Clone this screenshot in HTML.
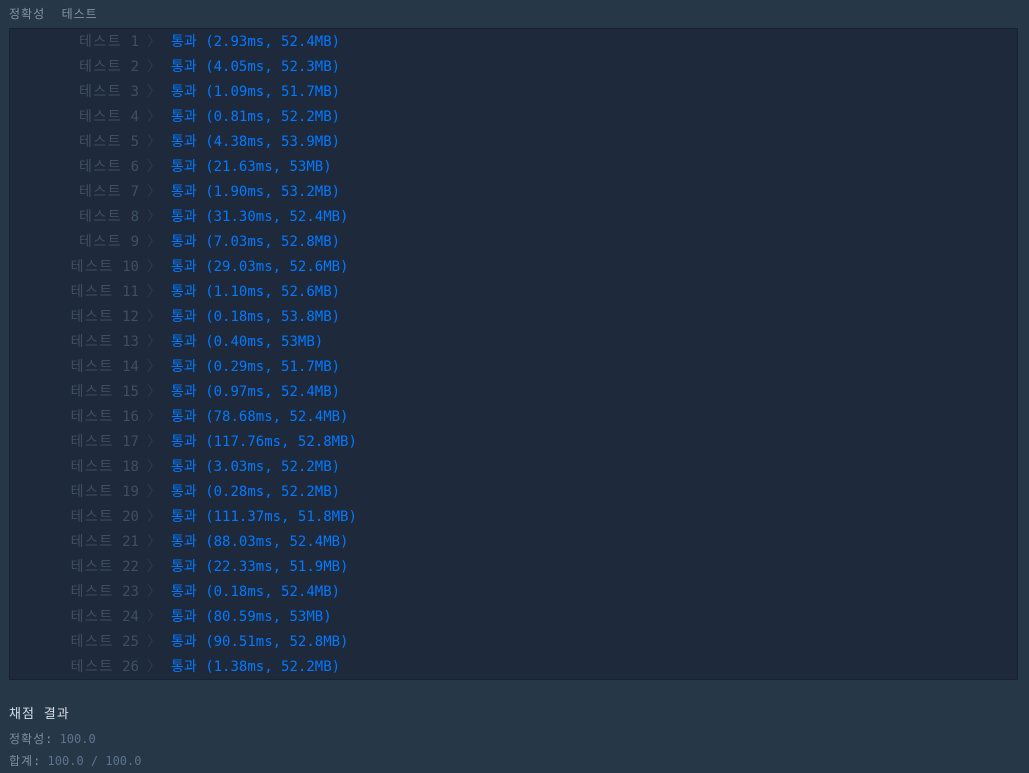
<!DOCTYPE html>
<html><head><meta charset="utf-8"><style>
html,body{margin:0;padding:0;background:#263747;width:1029px;height:773px;overflow:hidden}
body{font-family:"DejaVu Sans Mono","Noto Sans CJK KR",monospace;}
.hdr{position:absolute;left:9px;top:5px;font-size:12px;color:#8394a8;line-height:18px;letter-spacing:1px;white-space:pre}
.box{position:absolute;left:9px;top:28px;width:1007px;height:650px;background:#1e2a3b;border:1px solid #172130}
.row{position:absolute;left:0;height:25px;line-height:25px;font-size:14px;white-space:pre}
.lab{position:absolute;left:0;width:129px;text-align:right;color:#3f4f63}
.k{letter-spacing:1.5px}
.chev{position:absolute;left:137px;color:#2f3d4e;font-size:14px}
.res{position:absolute;left:161px;color:#0078ff}
.t{position:absolute;left:9px;font-size:12px;white-space:pre}
.t .k{letter-spacing:1px}
</style></head><body>
<div class="hdr">정확성  테스트</div>
<div class="box" id="b"></div>
<div class="t" style="top:703px;color:#d5dde6;font-size:13px"><span class="k">채점 결과</span></div>
<div class="t" style="top:730px;color:#7e8fa3"><span class="k">정확성</span>: <span style="color:#5c7390">100.0</span></div>
<div class="t" style="top:752px;color:#7e8fa3"><span class="k">합계</span>: <span style="color:#5c7390">100.0 / 100.0</span></div>
<script>
var r=["2.93ms, 52.4MB","4.05ms, 52.3MB","1.09ms, 51.7MB","0.81ms, 52.2MB","4.38ms, 53.9MB","21.63ms, 53MB","1.90ms, 53.2MB","31.30ms, 52.4MB","7.03ms, 52.8MB","29.03ms, 52.6MB","1.10ms, 52.6MB","0.18ms, 53.8MB","0.40ms, 53MB","0.29ms, 51.7MB","0.97ms, 52.4MB","78.68ms, 52.4MB","117.76ms, 52.8MB","3.03ms, 52.2MB","0.28ms, 52.2MB","111.37ms, 51.8MB","88.03ms, 52.4MB","22.33ms, 51.9MB","0.18ms, 52.4MB","80.59ms, 53MB","90.51ms, 52.8MB","1.38ms, 52.2MB"];
var h="";
for(var i=0;i<r.length;i++){h+='<div class="row" style="top:'+(i*25+1)+'px;width:1000px"><span class="lab"><span class="k">테스트</span> '+(i+1)+'</span><span class="chev">〉</span><span class="res">통과 ('+r[i]+')</span></div>';}
document.getElementById("b").innerHTML=h;
</script>
</body></html>
